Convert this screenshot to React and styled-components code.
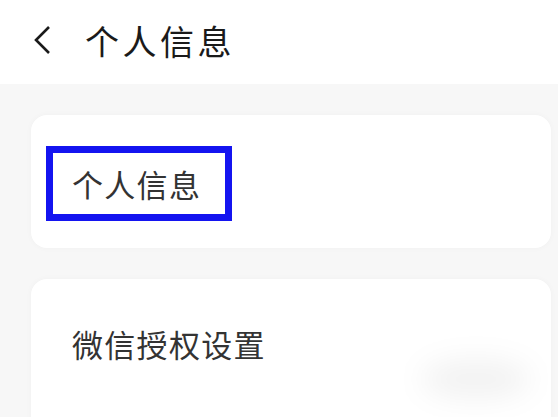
import styled, { createGlobalStyle } from "styled-components";

const GlobalStyle = createGlobalStyle`
  html, body {
    margin: 0;
    padding: 0;
    background: #f7f7f7;
    font-family: "Noto Sans CJK SC", "Noto Sans", sans-serif;
  }
`;

const Page = styled.div`
  width: 558px;
  height: 417px;
  overflow: hidden;
  background: #f7f7f7;
  display: flex;
  flex-direction: column;
`;

const Header = styled.div`
  flex-shrink: 0;
  height: 84px;
  background: #fff;
  display: flex;
  align-items: center;
  padding: 0 0 4px 31px;
  box-sizing: border-box;
  gap: 30px;
`;

const Back = styled.svg`
  width: 24px;
  height: 34px;
`;

const Title = styled.h1`
  margin: 0;
  font-size: 34px;
  font-weight: 400;
  color: #1a1a1a;
  letter-spacing: 3.5px;
`;

const Body = styled.div`
  flex-shrink: 0;
  display: flex;
  flex-direction: column;
  gap: 31px;
  padding: 31px 7px 0 31px;
`;

const Card = styled.div`
  flex-shrink: 0;
  position: relative;
  background: #fff;
  border-radius: 16px;
  height: ${(p) => p.$h}px;
  display: flex;
  align-items: ${(p) => (p.$top ? "flex-start" : "center")};
  padding: ${(p) => (p.$top ? "42px 0 0 41px" : "0 0 0 15px")};
  box-sizing: border-box;
  box-shadow: 0 0 6px rgba(0, 0, 0, 0.03);
  overflow: hidden;
`;

const Marked = styled.div`
  border: 7px solid #1414f0;
  padding: 8px 24px 8px 19px;
  margin-top: 4px;
`;

const Label = styled.span`
  font-size: 31px;
  color: #333;
  letter-spacing: 1.3px;
`;

const Smudge = styled.div`
  position: absolute;
  left: 390px;
  top: 80px;
  width: 110px;
  height: 40px;
  border-radius: 50%;
  background: rgba(0, 0, 0, 0.05);
  filter: blur(14px);
`;

export default function App() {
  return (
    <Page>
      <GlobalStyle />
      <Header>
        <Back viewBox="0 0 24 34">
          <path d="M18 4 L5 17 L18 30" fill="none" stroke="#1a1a1a" strokeWidth="2.6" />
        </Back>
        <Title>个人信息</Title>
      </Header>
      <Body>
        <Card $h={133}>
          <Marked>
            <Label>个人信息</Label>
          </Marked>
        </Card>
        <Card $h={200} $top>
          <Label>微信授权设置</Label>
          <Smudge />
        </Card>
      </Body>
    </Page>
  );
}
